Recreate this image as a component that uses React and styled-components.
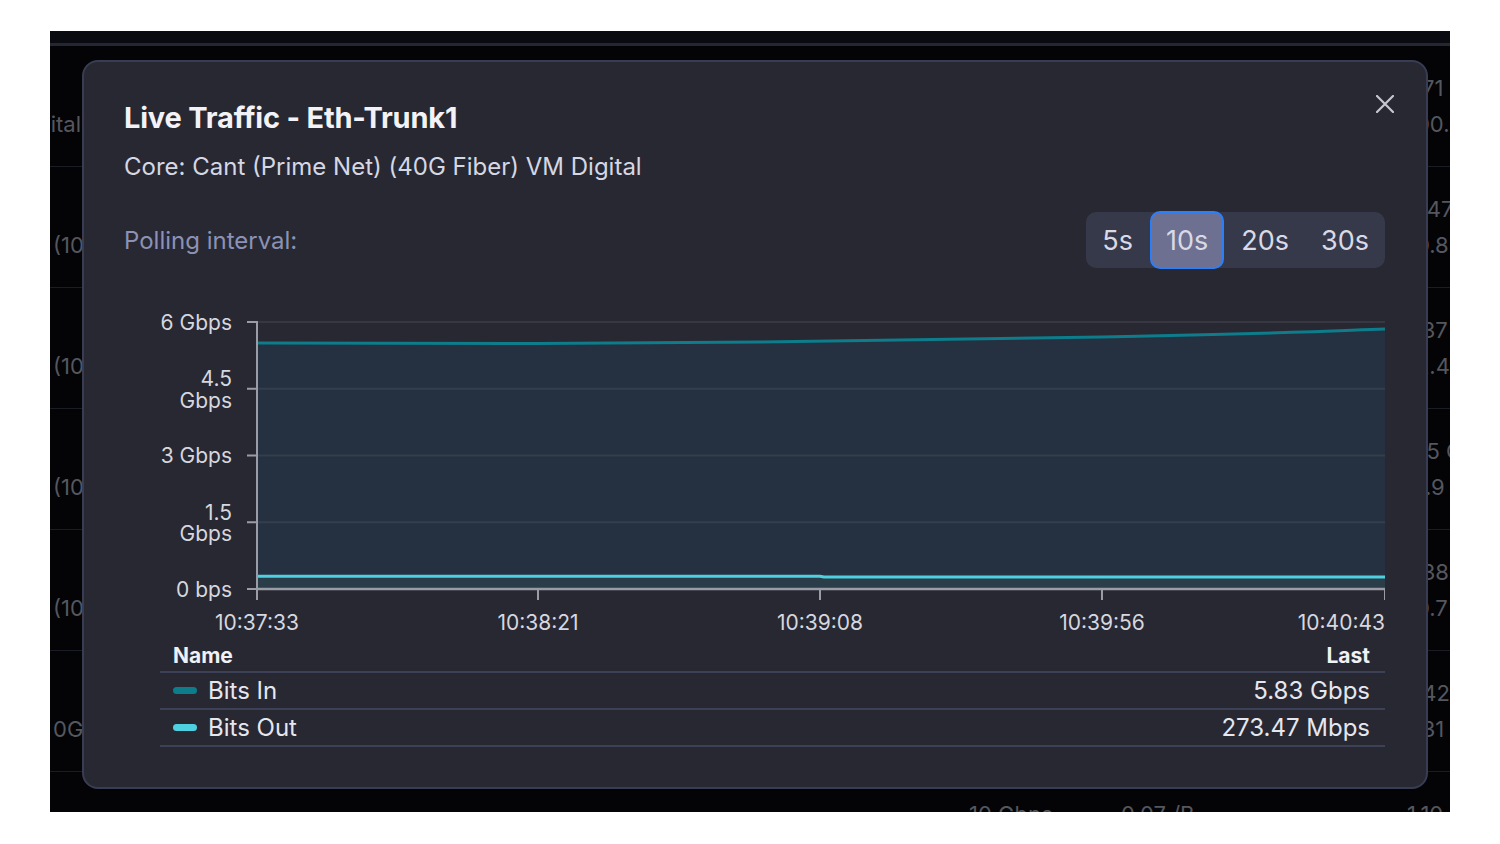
import React from "react";
import styled, { createGlobalStyle } from "styled-components";

const GlobalStyle = createGlobalStyle`
  html, body {
    margin: 0;
    background: #ffffff;
  }
  body {
    font-family: Inter, "Noto Sans", sans-serif;
    -webkit-font-smoothing: antialiased;
  }
`;

const Page = styled.div`
  width: 1500px;
  height: 844px;
  padding: 31px 50px 0;
  box-sizing: border-box;
`;

const Backdrop = styled.div`
  position: relative;
  width: 1400px;
  height: 781px;
  background: #040406;
  overflow: hidden;
`;

const TopStrip = styled.div`
  height: 12px;
  background: #0a0b10;
  border-bottom: 3px solid #252834;
`;

const Row = styled.div`
  display: grid;
  grid-template-columns: 916px 152px 286px 200px;
  padding-left: 3px;
  height: 120px;
  border-bottom: 1px solid #1b1d25;
`;

const Cell = styled.div`
  display: flex;
  flex-direction: column;
  justify-content: center;
  font-size: 22px;
  line-height: 36px;
  color: #55575f;
  white-space: nowrap;
  overflow: hidden;
  margin-left: ${(p) => p.$shift || 0}px;
`;

const Modal = styled.div`
  position: absolute;
  left: 32px;
  top: 29px;
  width: 1346px;
  height: 729px;
  box-sizing: border-box;
  background: #282833;
  border: 2px solid #383d53;
  border-radius: 16px;
  padding: 38px 41px 0 40px;
  display: flex;
  flex-direction: column;
`;

const CloseButton = styled.button`
  position: absolute;
  top: 28px;
  right: 27px;
  width: 28px;
  height: 28px;
  padding: 0;
  border: none;
  background: transparent;
  display: flex;
  align-items: center;
  justify-content: center;
  cursor: pointer;
`;

const Title = styled.h2`
  margin: 0;
  font-size: 29px;
  line-height: 36px;
  font-weight: 700;
  letter-spacing: -0.2px;
  color: #f2f2f7;
`;

const Subtitle = styled.div`
  margin-top: 16px;
  font-size: 24px;
  line-height: 30px;
  color: #d5d7e3;
`;

const PollRow = styled.div`
  margin-top: 29px;
  height: 58px;
  display: flex;
  align-items: center;
  justify-content: space-between;
`;

const PollLabel = styled.span`
  font-size: 24px;
  color: #8b92b5;
`;

const Segments = styled.div`
  display: flex;
  align-items: center;
  height: 56px;
  background: #363949;
  border-radius: 10px;
`;

const SegButton = styled.button`
  height: 58px;
  padding: 0 14px;
  margin: ${(p) => (p.$active ? "0 1px" : "0")};
  border: 2px solid ${(p) => (p.$active ? "#2d7ff9" : "transparent")};
  border-radius: 10px;
  background: ${(p) => (p.$active ? "#6d7090" : "transparent")};
  color: #d9dae5;
  font-family: Inter, "Noto Sans", sans-serif;
  font-size: 27px;
  cursor: pointer;
`;

const ChartSvg = styled.svg`
  display: block;
  margin-top: 31px;
`;

const AxisText = styled.text`
  font-family: Inter, "Noto Sans", sans-serif;
  font-size: 21px;
  fill: #d6d7df;
`;

const Legend = styled.div`
  margin-left: 36px;
  display: flex;
  flex-direction: column;
`;

const LegendRow = styled.div`
  display: flex;
  align-items: center;
  justify-content: space-between;
  height: ${(p) => (p.$head ? 31 : 35)}px;
  padding: 0 15px 0 13px;
  border-bottom: 2px solid #3c4157;
  font-size: ${(p) => (p.$head ? 21 : 24)}px;
  font-weight: ${(p) => (p.$head ? 700 : 400)};
  color: ${(p) => (p.$head ? "#f0f0f5" : "#e6e7ee")};
`;

const SeriesName = styled.span`
  display: flex;
  align-items: center;
`;

const Swatch = styled.span`
  width: 24px;
  height: 7px;
  border-radius: 4px;
  margin-right: 11px;
  background: ${(p) => p.$color};
`;

const bgRows = [
  { a: ["", "Digital"], shift: -37, b: ["10 Gbps", "10 Gbps"], c: ["0.01 /B", "0.01 /B"], d: ["1.71 Gbps", "100.4 Mbps"] },
  { a: ["", "(10G Fiber)"], b: ["10 Gbps", "10 Gbps"], c: ["0.02 /B", "0.02 /B"], d: ["2.47 Gbps", "10.8 Mbps"] },
  { a: ["", "(10G Fiber)"], b: ["10 Gbps", "10 Gbps"], c: ["0.03 /B", "0.03 /B"], d: ["1.37 Gbps", "12.4 Mbps"] },
  { a: ["", "(10G Fiber)"], b: ["10 Gbps", "10 Gbps"], c: ["0.04 /B", "0.04 /B"], d: ["2.5 Gbps", "11.9 Mbps"] },
  { a: ["", "(10G Fiber)"], b: ["10 Gbps", "10 Gbps"], c: ["0.05 /B", "0.05 /B"], d: ["1.38 Gbps", "10.7 Mbps"] },
  { a: ["", "0G Fiber"], b: ["10 Gbps", "10 Gbps"], c: ["0.06 /B", "0.06 /B"], d: ["1.42 Gbps", "1.31 Gbps"] },
  { a: ["", "(10G Fiber)"], b: ["10 Gbps", "10 Gbps"], c: ["0.07 /B", "0.07 /B"], d: ["1.10 Gbps", "1.2 Gbps"] },
];

const intervals = ["5s", "10s", "20s", "30s"];

// chart geometry (svg coords)
const PL = 133;
const PR = 1261;
const PT = 22;
const PB = 289;
const yOf = (v) => PB - (v / 6) * (PB - PT);
const gridValues = [6, 4.5, 3, 1.5];
const xTicks = [
  { x: 133, label: "10:37:33" },
  { x: 414, label: "10:38:21" },
  { x: 696, label: "10:39:08" },
  { x: 978, label: "10:39:56" },
  { x: 1261, label: "10:40:43" },
];

const inLine = "M133,43 L414,43.5 C600,43 800,40.5 978,37 S1180,32 1261,29";
const outLine = "M133,276.2 L696,276.2 L700,277 L1261,277";

const Chart = () => (
  <ChartSvg width="1261" height="340" viewBox="0 0 1261 340">
    <path d={`${inLine} L${PR},${PB} L${PL},${PB} Z`} fill="#253040" />
    <path d={`${outLine} L${PR},${PB} L${PL},${PB} Z`} fill="#2a3d49" />
    {gridValues.map((v) => (
      <line key={v} x1={PL} x2={PR} y1={yOf(v)} y2={yOf(v)} stroke="rgba(255,255,255,0.07)" strokeWidth="2" />
    ))}
    <path d={inLine} fill="none" stroke="#0d7c8b" strokeWidth="3" />
    <path d={outLine} fill="none" stroke="#4fd0e0" strokeWidth="3" />
    <line x1={PL} x2={PL} y1={PT - 1} y2={PB + 11} stroke="#9b9da6" strokeWidth="2" />
    <line x1={PL} x2={PR + 1} y1={PB} y2={PB} stroke="#9b9da6" strokeWidth="2.5" />
    {[6, 4.5, 3, 1.5, 0].map((v) => (
      <line key={v} x1={PL - 10} x2={PL} y1={yOf(v)} y2={yOf(v)} stroke="#9b9da6" strokeWidth="2" />
    ))}
    {xTicks.map((t) => (
      <line key={t.x} x1={t.x} x2={t.x} y1={PB} y2={PB + 11} stroke="#9b9da6" strokeWidth="2" />
    ))}
    <AxisText x="108" y="22" textAnchor="end" dominantBaseline="central">6 Gbps</AxisText>
    <AxisText x="108" y="78" textAnchor="end" dominantBaseline="central">4.5</AxisText>
    <AxisText x="108" y="100" textAnchor="end" dominantBaseline="central">Gbps</AxisText>
    <AxisText x="108" y="155" textAnchor="end" dominantBaseline="central">3 Gbps</AxisText>
    <AxisText x="108" y="212" textAnchor="end" dominantBaseline="central">1.5</AxisText>
    <AxisText x="108" y="233" textAnchor="end" dominantBaseline="central">Gbps</AxisText>
    <AxisText x="108" y="289" textAnchor="end" dominantBaseline="central">0 bps</AxisText>
    {xTicks.map((t, i) => (
      <AxisText
        key={t.label}
        x={t.x}
        y="322"
        textAnchor={i === xTicks.length - 1 ? "end" : "middle"}
        dominantBaseline="central"
      >
        {t.label}
      </AxisText>
    ))}
  </ChartSvg>
);

const App = () => (
  <Page>
    <GlobalStyle />
    <Backdrop>
      <TopStrip />
      {bgRows.map((r, i) => (
        <Row key={i}>
          <Cell $shift={r.shift}>
            <span>{r.a[0] || "\u00a0"}</span>
            <span>{r.a[1]}</span>
          </Cell>
          <Cell>
            <span>{r.b[0]}</span>
            <span>{r.b[1]}</span>
          </Cell>
          <Cell>
            <span>{r.c[0]}</span>
            <span>{r.c[1]}</span>
          </Cell>
          <Cell>
            <span>{r.d[0]}</span>
            <span>{r.d[1]}</span>
          </Cell>
        </Row>
      ))}

      <Modal>
        <CloseButton aria-label="Close">
          <svg width="18" height="18" viewBox="0 0 18 18">
            <path d="M1 1 L17 17 M17 1 L1 17" stroke="#c5c7d2" strokeWidth="2.2" strokeLinecap="round" />
          </svg>
        </CloseButton>
        <Title>Live Traffic - Eth-Trunk1</Title>
        <Subtitle>Core: Cant (Prime Net) (40G Fiber) VM Digital</Subtitle>
        <PollRow>
          <PollLabel>Polling interval:</PollLabel>
          <Segments>
            {intervals.map((s) => (
              <SegButton key={s} $active={s === "10s"}>
                {s}
              </SegButton>
            ))}
          </Segments>
        </PollRow>
        <Chart />
        <Legend>
          <LegendRow $head>
            <span>Name</span>
            <span>Last</span>
          </LegendRow>
          <LegendRow>
            <SeriesName>
              <Swatch $color="#0d7c8b" />
              Bits In
            </SeriesName>
            <span>5.83 Gbps</span>
          </LegendRow>
          <LegendRow>
            <SeriesName>
              <Swatch $color="#4fd0e0" />
              Bits Out
            </SeriesName>
            <span>273.47 Mbps</span>
          </LegendRow>
        </Legend>
      </Modal>
    </Backdrop>
  </Page>
);

export default App;
